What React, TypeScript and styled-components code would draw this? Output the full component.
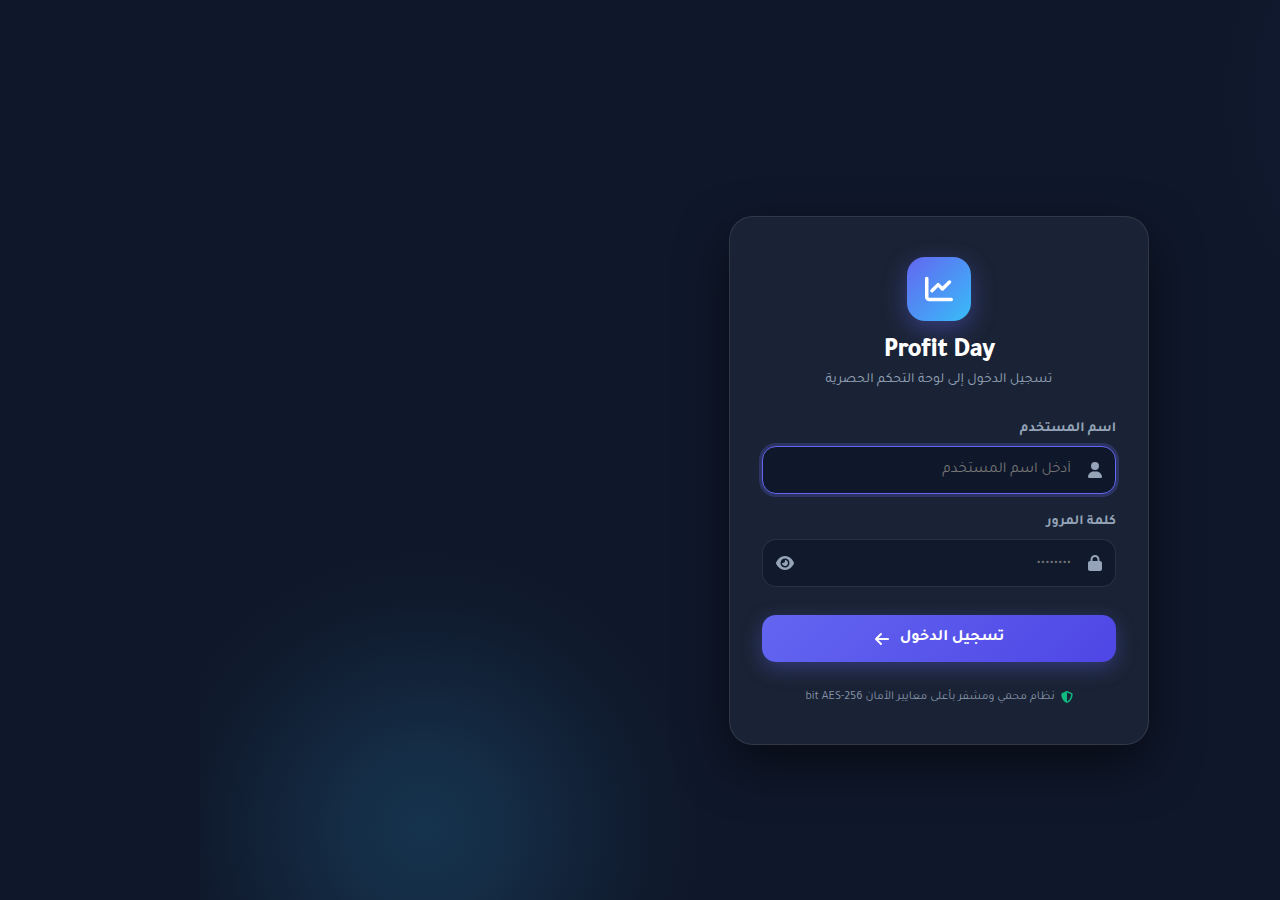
import React, { useState } from "react";
import styled, { createGlobalStyle } from "styled-components";
import {
  FaArrowLeft,
  FaChartLine,
  FaEye,
  FaEyeSlash,
  FaLock,
  FaShieldHalved,
  FaUser,
} from "react-icons/fa6";

const GlobalStyle = createGlobalStyle`
  *, *::before, *::after { box-sizing: border-box; }
  body {
    margin: 0;
    background: #0f172a;
    color: #f8fafc;
    font-family: Tajawal, "Noto Sans", sans-serif;
  }
`;

const Page = styled.main`
  position: relative;
  display: flex;
  align-items: center;
  justify-content: center;
  min-height: 100vh;
  padding: 61px 0 0 598px;
  overflow: hidden;

  @media (max-width: 1040px) {
    padding: 24px;
  }
`;

const Glow = styled.div<{ $place: "bottom" | "top" }>`
  position: absolute;
  pointer-events: none;
  ${({ $place }) =>
    $place === "bottom"
      ? `
    left: 200px;
    bottom: 0;
    width: 540px;
    height: 400px;
    background: radial-gradient(circle 300px at 225px 328px, rgba(56, 189, 248, 0.17), rgba(56, 189, 248, 0.135) 25%, rgba(56, 189, 248, 0.075) 50%, rgba(56, 189, 248, 0.02) 75%, transparent);
  `
      : `
    top: 0;
    right: 0;
    width: 80px;
    height: 300px;
    background: radial-gradient(circle 300px at 312px 100px, rgba(99, 102, 241, 0.12), transparent);
  `}
`;

const Card = styled.section`
  position: relative;
  width: 100%;
  max-width: 420px;
  padding: 40px 32px;
  border: 1px solid rgba(255, 255, 255, 0.1);
  border-radius: 24px;
  background: #1a2335;
  box-shadow: 0 20px 50px rgba(0, 0, 0, 0.5);
`;

const Brand = styled.header`
  display: flex;
  flex-direction: column;
  align-items: center;
  margin-bottom: 28px;
  text-align: center;
`;

const Logo = styled.div`
  display: grid;
  place-items: center;
  width: 64px;
  height: 64px;
  margin-bottom: 16px;
  border-radius: 18px;
  background: linear-gradient(135deg, #6366f1, #38bdf8);
  box-shadow: 0 8px 24px rgba(99, 102, 241, 0.4);
  color: #fff;
  font-size: 28px;
`;

const Title = styled.h1`
  margin: 0;
  font-size: 27px;
  font-weight: 800;
  line-height: 32px;
  letter-spacing: -0.03em;
  color: #fff;
`;

const Subtitle = styled.p`
  margin: 0;
  font-size: 14px;
  line-height: 22px;
  color: #94a3b8;
`;

const Field = styled.div`
  margin-bottom: 18px;
`;

const Label = styled.label`
  display: block;
  margin-bottom: 7px;
  font-size: 14px;
  font-weight: 700;
  line-height: 20px;
  color: #94a3b8;
`;

const InputBox = styled.div`
  display: flex;
  align-items: center;
  height: 48px;
  padding: 0 12px 0 13px;
  border: 1px solid rgba(255, 255, 255, 0.1);
  border-radius: 14px;
  background: #111a2c;
  color: #94a3b8;
  font-size: 16px;

  &:focus-within {
    border-color: #6366f1;
    background: #0f172a;
    box-shadow: 0 0 0 3px rgba(99, 102, 241, 0.25);
  }
`;

const Input = styled.input`
  flex: 1;
  min-width: 0;
  height: 100%;
  padding: 0 16px;
  border: 0;
  outline: 0;
  background: transparent;
  color: #f8fafc;
  font: 400 15px Tajawal, "Noto Sans", sans-serif;

  &::placeholder {
    color: #757575;
  }
`;

const IconButton = styled.button`
  display: flex;
  padding: 0;
  border: 0;
  background: none;
  color: inherit;
  font-size: 18px;
  cursor: pointer;
`;

const Submit = styled.button`
  display: flex;
  align-items: center;
  justify-content: center;
  gap: 10px;
  width: 100%;
  height: 47px;
  margin-top: 28px;
  border: 0;
  border-radius: 14px;
  background: linear-gradient(135deg, #6366f1, #4f46e5);
  box-shadow: 0 6px 20px rgba(99, 102, 241, 0.35);
  color: #fff;
  font: 700 16px Tajawal, "Noto Sans", sans-serif;
  cursor: pointer;
`;

const Security = styled.p`
  display: flex;
  align-items: center;
  justify-content: center;
  gap: 6px;
  margin: 28px 0 0;
  font-size: 12px;
  line-height: 14px;
  color: #8795aa;

  svg {
    color: #10b981;
  }
`;

export default function App() {
  const [visible, setVisible] = useState(false);
  return (
    <>
      <GlobalStyle />
      <Page>
        <Glow $place="top" />
        <Glow $place="bottom" />
        <Card dir="rtl" lang="ar">
          <Brand>
            <Logo>
              <FaChartLine />
            </Logo>
            <Title>Profit Day</Title>
            <Subtitle>تسجيل الدخول إلى لوحة التحكم الحصرية</Subtitle>
          </Brand>
          <form onSubmit={(e) => e.preventDefault()}>
            <Field>
              <Label htmlFor="username">اسم المستخدم</Label>
              <InputBox>
                <FaUser />
                <Input id="username" placeholder="أدخل اسم المستخدم" autoFocus />
              </InputBox>
            </Field>
            <Field>
              <Label htmlFor="password">كلمة المرور</Label>
              <InputBox>
                <FaLock />
                <Input
                  id="password"
                  type={visible ? "text" : "password"}
                  placeholder="••••••••"
                />
                <IconButton
                  type="button"
                  aria-label="إظهار كلمة المرور"
                  onClick={() => setVisible(!visible)}
                >
                  {visible ? <FaEyeSlash /> : <FaEye />}
                </IconButton>
              </InputBox>
            </Field>
            <Submit type="submit">
              <span>تسجيل الدخول</span>
              <FaArrowLeft />
            </Submit>
          </form>
          <Security>
            <FaShieldHalved />
            <span>نظام محمي ومشفر بأعلى معايير الأمان 256-bit AES</span>
          </Security>
        </Card>
      </Page>
    </>
  );
}
